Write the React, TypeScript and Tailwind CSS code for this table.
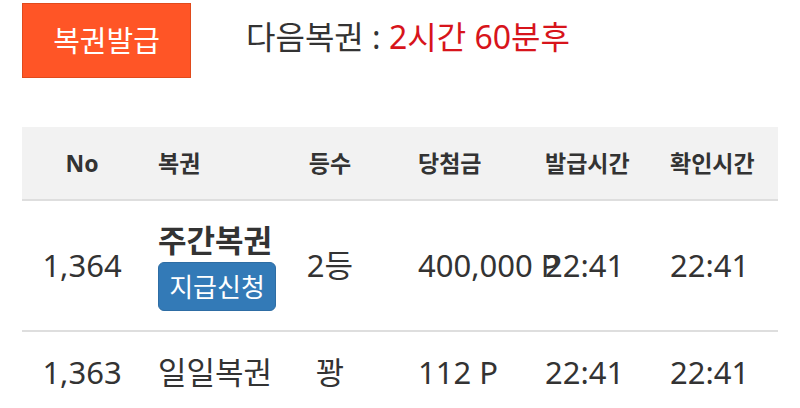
import React from "react";

const font = { fontFamily: '"Noto Sans", "Noto Sans CJK KR", sans-serif' };

type Row = {
  no: string;
  name: string;
  rank: string;
  prize: string;
  issued: string;
  checked: string;
  claim?: boolean;
};

const rows: Row[] = [
  { no: "1,364", name: "주간복권", rank: "2등", prize: "400,000 P", issued: "22:41", checked: "22:41", claim: true },
  { no: "1,363", name: "일일복권", rank: "꽝", prize: "112 P", issued: "22:41", checked: "22:41" },
];

const cols = "grid grid-cols-[120px_146px_84px_127px_125px_154px]";

export default function App() {
  return (
    <div className="w-[800px] h-[408px] overflow-hidden bg-white text-[#333]" style={font}>
      {/* Top bar */}
      <div className="flex items-center pl-[22px] pt-[3px]">
        <button className="w-[169px] h-[75px] bg-[#ff5526] border border-[#e04a1c] text-white text-[29px] leading-none">
          복권발급
        </button>
        <p className="ml-[55px] mb-2 text-[32px] leading-none">
          다음복권 : <span className="text-[#d7141b]">2시간 60분후</span>
        </p>
      </div>

      {/* Table */}
      <div className="mx-[22px] mt-[49px]">
        <div className={`${cols} h-[74px] items-center whitespace-nowrap bg-[#f2f2f2] border-b-2 border-[#dedede] text-[23px] font-bold text-[#333]`}>
          <div className="text-center">No</div>
          <div className="pl-4">복권</div>
          <div className="text-center">등수</div>
          <div className="pl-[46px]">당첨금</div>
          <div className="pl-[46px]">발급시간</div>
          <div className="pl-[46px]">확인시간</div>
        </div>

        {rows.map((r) => (
          <div
            key={r.no}
            className={`${cols} items-center border-b-2 border-[#dedede] text-[31px] ${r.claim ? "h-[131px]" : "h-[82px]"}`}
          >
            <div className="text-center">{r.no}</div>
            <div className="pl-4">
              {r.claim ? (
                <div className="flex flex-col items-start">
                  <span className="font-bold leading-[40px]">{r.name}</span>
                  <button className="mt-[2px] w-[118px] h-[49px] rounded-md bg-[#337ab7] border border-[#2e6da4] text-white text-[26px] leading-none">
                    지급신청
                  </button>
                </div>
              ) : (
                r.name
              )}
            </div>
            <div className="text-center">{r.rank}</div>
            <div className="pl-[46px] whitespace-nowrap">{r.prize}</div>
            <div className="pl-[46px]">{r.issued}</div>
            <div className="pl-[46px]">{r.checked}</div>
          </div>
        ))}
      </div>
    </div>
  );
}
